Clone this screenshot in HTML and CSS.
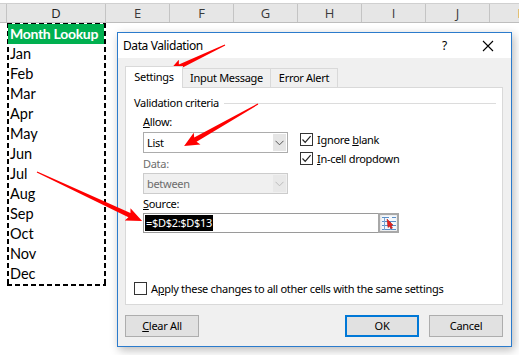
FILE: index.html
```html
<!DOCTYPE html>
<html>
<head>
<meta charset="utf-8">
<link rel="stylesheet" href="styles.css">
</head>
<body>
<div class="sheet">
  <div class="colbar">
    <div class="corner"></div>
    <div class="col cold">D</div>
    <div class="col">E</div>
    <div class="col">F</div>
    <div class="col">G</div>
    <div class="col">H</div>
    <div class="col">I</div>
    <div class="col">J</div>
    <div class="col colk">K</div>
  </div>
  <div class="ants">
    <div class="cell head">Month Lookup</div>
    <div class="cell">Jan</div>
    <div class="cell">Feb</div>
    <div class="cell">Mar</div>
    <div class="cell">Apr</div>
    <div class="cell">May</div>
    <div class="cell">Jun</div>
    <div class="cell">Jul</div>
    <div class="cell">Aug</div>
    <div class="cell">Sep</div>
    <div class="cell">Oct</div>
    <div class="cell">Nov</div>
    <div class="cell">Dec</div>
  </div>
</div>

<div class="dlg">
  <div class="titlebar">
    <span class="title">Data Validation</span>
    <span class="help">?</span>
    <svg class="close" width="12" height="12" viewBox="0 0 12 12"><path d="M1 1L11 11M11 1L1 11" stroke="#000" stroke-width="1.1"/></svg>
  </div>
  <div class="dbody">
    <div class="tabs">
      <div class="tab active">Settings</div>
      <div class="tab t2">Input Message</div>
      <div class="tab t3">Error Alert</div>
    </div>
    <div class="panel">
      <div class="legend"><span>Validation criteria</span><div class="rule"></div></div>
      <div class="inset">
        <div class="lbl l-allow"><u>A</u>llow:</div>
        <div class="allowrow">
          <div class="select">
            <span class="val">List</span>
            <span class="drop"><svg width="9" height="6" viewBox="0 0 9 6"><path d="M0.5 0.8L4.5 4.8L8.5 0.8" fill="none" stroke="#555" stroke-width="1"/></svg></span>
          </div>
          <div class="checks">
            <div class="chk"><span class="box"><svg width="11" height="11" viewBox="0 0 11 11"><path d="M1.5 5.5L4.2 8.3L9.6 2.2" fill="none" stroke="#222" stroke-width="1.2"/></svg></span><span>Ignore <u>b</u>lank</span></div>
            <div class="chk c2"><span class="box"><svg width="11" height="11" viewBox="0 0 11 11"><path d="M1.5 5.5L4.2 8.3L9.6 2.2" fill="none" stroke="#222" stroke-width="1.2"/></svg></span><span><u>I</u>n-cell dropdown</span></div>
          </div>
        </div>
        <div class="lbl l-data dis">Data:</div>
        <div class="select disabled">
          <span class="val">between</span>
          <span class="drop"><svg width="9" height="6" viewBox="0 0 9 6"><path d="M0.5 0.8L4.5 4.8L8.5 0.8" fill="none" stroke="#bbb" stroke-width="1"/></svg></span>
        </div>
        <div class="lbl l-src"><u>S</u>ource:</div>
        <div class="source">
          <div class="srcfield"><span class="sel">=$D$2:$D$13</span></div>
          <div class="srcbtn">
            <svg width="16" height="16" viewBox="0 0 16 16">
              <rect x="0.5" y="0.5" width="15" height="15" fill="#f4f8fc"/>
              <path d="M1 2.5H8M1 6.5H15M1 10.5H15M1 14.5H15" stroke="#5b8fc8" stroke-width="1"/>
              <path d="M3.5 3V15M9.5 7V15" stroke="#7aa6d6" stroke-width="1"/>
              <path d="M11 2.5H15" stroke="#5b8fc8" stroke-width="1"/>
              <path d="M6 4L12 10L10 10.5L11.5 13L10 13.8L8.6 11.2L7 12.6Z" fill="#e8231f" stroke="#a01010" stroke-width="0.5"/>
            </svg>
          </div>
        </div>
      </div>
      <div class="chk apply"><span class="box"></span><span>A<u>p</u>ply these changes to all other cells with the same settings</span></div>
    </div>
    <div class="buttons">
      <div class="btn"><u>C</u>lear All</div>
      <div class="spacer"></div>
      <div class="btn ok">OK</div>
      <div class="btn">Cancel</div>
    </div>
  </div>
</div>

<svg class="arrows" width="519" height="355" viewBox="0 0 519 355">
  <g fill="#ff0000">
    <polygon transform="translate(225 45) rotate(154.65)" points="0,-0.6 50,-2.2 48,-6.5 63,0 48,6.5 50,2.2 0,0.6"/>
    <polygon transform="translate(258 104) rotate(150.42)" points="0,-0.6 72,-2.4 70,-6.8 85,0 70,6.8 72,2.4 0,0.6"/>
    <polygon transform="translate(37 172) rotate(25.02)" points="0,-0.6 102,-2.4 100,-6.8 116,0 100,6.8 102,2.4 0,0.6"/>
  </g>
</svg>
</body>
</html>
```

FILE: styles.css
```css
html, body {
  margin: 0;
  padding: 0;
}
body {
  width: 519px;
  height: 355px;
  overflow: hidden;
  background: #fff;
  position: relative;
  font-family: "Lato", "Liberation Sans", sans-serif;
}

/* spreadsheet */
.colbar {
  margin-top: 3px;
  height: 20px;
  box-sizing: border-box;
  display: flex;
  background: #e6e6e6;
  border-top: 1px solid #d0d0d0;
  border-bottom: 1px solid #bdbdbd;
  overflow: hidden;
}
.corner {
  width: 7px;
  flex: none;
  border-right: 1px solid #c4c4c4;
  box-sizing: border-box;
}
.col {
  width: 64px;
  flex: none;
  box-sizing: border-box;
  border-right: 1px solid #c4c4c4;
  text-align: center;
  font-family: "Open Sans", sans-serif;
  font-size: 13px;
  line-height: 18px;
  color: #3a3a3a;
}
.col.cold {
  width: 99px;
  color: #222;
}
.col.colk {
  color: #c0602a;
}
.ants {
  margin-left: 7px;
  width: 99px;
  box-sizing: border-box;
  padding: 1px 2px 2px 1px;
  background:
    repeating-linear-gradient(90deg, #000 0 5px, transparent 5px 8px) left top / 100% 2px no-repeat,
    repeating-linear-gradient(90deg, #000 0 5px, transparent 5px 8px) left bottom / 100% 2px no-repeat,
    repeating-linear-gradient(180deg, #000 0 5px, transparent 5px 8px) left top / 2px 100% no-repeat,
    repeating-linear-gradient(180deg, #000 0 5px, transparent 5px 8px) right top / 2px 100% no-repeat;
}
.cell {
  height: 20px;
  line-height: 20px;
  font-size: 14.5px;
  color: #000;
  padding-left: 2px;
  white-space: nowrap;
}
.cell.head {
  background: #00b050;
  color: #fff;
  font-weight: bold;
  font-size: 14px;
  letter-spacing: -0.3px;
  overflow: hidden;
}

/* dialog */
.dlg {
  position: absolute;
  left: 117px;
  top: 32px;
  width: 395px;
  height: 315px;
  box-sizing: border-box;
  border: 1px solid #2b7bcc;
  background: #f0f0f0;
  box-shadow: 2px 3px 9px rgba(0, 0, 0, 0.28);
  display: flex;
  flex-direction: column;
  font-family: "Noto Sans", "Open Sans", sans-serif;
  font-size: 11px;
  letter-spacing: -0.3px;
  color: #000;
}
.titlebar {
  height: 25px;
  flex: none;
  background: #fff;
  display: flex;
  align-items: center;
  padding-left: 5px;
}
.title {
  font-size: 12px;
  letter-spacing: -0.4px;
}
.help {
  margin-left: auto;
  font-size: 12px;
  margin-right: 35px;
}
.close {
  margin-right: 17px;
}
.dbody {
  flex: 1;
  display: flex;
  flex-direction: column;
  padding: 8px 8px 0 7px;
}
.tabs {
  display: flex;
  align-items: flex-end;
  height: 21px;
  position: relative;
  z-index: 1;
}
.tab {
  box-sizing: border-box;
  height: 19px;
  line-height: 17px;
  border: 1px solid #d9d9d9;
  border-bottom: none;
  background: #f0f0f0;
  text-align: center;
  white-space: nowrap;
}
.tab.active {
  height: 22px;
  margin-bottom: -1px;
  background: #fff;
  width: 58px;
  line-height: 19px;
}
.tab.t2 {
  width: 88px;
  border-left: none;
}
.tab.t3 {
  width: 67px;
  border-left: none;
}
.panel {
  height: 218px;
  box-sizing: border-box;
  border: 1px solid #d9d9d9;
  background: #fff;
  padding: 8px 6px 0 8px;
  display: flex;
  flex-direction: column;
}
.legend {
  display: flex;
  align-items: center;
  height: 14px;
  line-height: 14px;
}
.legend .rule {
  flex: 1;
  height: 1px;
  background: #dcdcdc;
  margin-left: 5px;
}
.inset {
  padding-left: 9px;
}
.lbl {
  height: 14px;
  line-height: 14px;
}
.l-allow { margin-top: 5px; }
.l-data { margin-top: 4px; }
.l-src { margin-top: 3px; }
.dis { color: #6d6d6d; }
.allowrow {
  display: flex;
  align-items: flex-start;
  height: 21px;
  margin-top: 3px;
}
.select {
  width: 145px;
  height: 21px;
  flex: none;
  box-sizing: border-box;
  border: 1px solid #acacac;
  background: #fff;
  display: flex;
  align-items: center;
  padding: 1px;
}
.select .val {
  flex: 1;
  padding-left: 2px;
}
.select .drop {
  width: 13px;
  height: 17px;
  background: #e5e5e5;
  display: flex;
  align-items: center;
  justify-content: center;
}
.select.disabled {
  margin-top: 2px;
  background: #f0f0f0;
  border-color: #cccccc;
  color: #6d6d6d;
}
.select.disabled .drop {
  background: #e8e8e8;
}
.checks {
  margin-left: 12px;
  padding-top: 1px;
}
.chk {
  display: flex;
  align-items: center;
  height: 13px;
  line-height: 13px;
  white-space: nowrap;
}
.chk.c2 {
  margin-top: 6px;
}
.box {
  width: 13px;
  height: 13px;
  box-sizing: border-box;
  border: 1px solid #333;
  background: #fff;
  margin-right: 4px;
  display: flex;
  align-items: center;
  justify-content: center;
  flex: none;
}
.source {
  margin-top: 2px;
  width: 256px;
  height: 20px;
  display: flex;
}
.srcfield {
  flex: 1;
  box-sizing: border-box;
  border: 1px solid #9a9a9a;
  border-right: none;
  background: #fff;
  padding: 1px;
  display: flex;
}
.sel {
  background: #000;
  color: #fff;
  height: 16px;
  line-height: 16px;
  padding: 0 1px;
}
.srcbtn {
  width: 21px;
  box-sizing: border-box;
  border: 2px solid #a8a8a8;
  background: #e6e6e6;
  display: flex;
  align-items: center;
  justify-content: center;
}
.chk.apply {
  margin-top: 48px;
  height: 14px;
}
.buttons {
  display: flex;
  margin-top: 10px;
}
.btn {
  box-sizing: border-box;
  width: 74px;
  height: 22px;
  line-height: 20px;
  border: 1px solid #adadad;
  background: #e1e1e1;
  text-align: center;
}
.btn.ok {
  border: 2px solid #0078d7;
  line-height: 18px;
  margin-right: 10px;
}
.spacer {
  flex: 1;
}

.arrows {
  position: absolute;
  left: 0;
  top: 0;
  pointer-events: none;
}
```
